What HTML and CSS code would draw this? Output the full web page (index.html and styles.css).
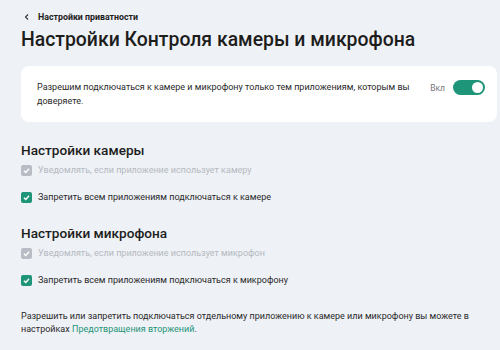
FILE: index.html
```html
<!DOCTYPE html>
<html lang="ru">

<head>
    <meta charset="UTF-8">
    <title>Настройки Контроля камеры и микрофона</title>
    <link rel="stylesheet" href="styles.css">
</head>

<body>
    <div class="page">
        <a class="back" href="#">
            <svg width="8" height="8" viewBox="0 0 8 8"><path d="M5 1.5 L2.5 4 L5 6.5" fill="none" stroke="#333" stroke-width="1.1"/></svg>
            <span>Настройки приватности</span>
        </a>
        <h1>Настройки Контроля камеры и микрофона</h1>

        <div class="card">
            <p>Разрешим подключаться к камере и микрофону только тем приложениям, которым вы доверяете.</p>
            <div class="switch-box">
                <span class="switch-label">Вкл</span>
                <span class="switch"><span class="thumb"></span></span>
            </div>
        </div>

        <h2>Настройки камеры</h2>
        <div class="option disabled">
            <span class="check"><svg viewBox="0 0 12 12"><path d="M3.2 6.2 L5.2 8.1 L8.8 4.2" fill="none" stroke="#fff" stroke-width="1.6"/></svg></span>
            Уведомлять, если приложение использует камеру
        </div>
        <div class="option">
            <span class="check"><svg viewBox="0 0 12 12"><path d="M3.2 6.2 L5.2 8.1 L8.8 4.2" fill="none" stroke="#fff" stroke-width="1.6"/></svg></span>
            Запретить всем приложениям подключаться к камере
        </div>

        <h2>Настройки микрофона</h2>
        <div class="option disabled">
            <span class="check"><svg viewBox="0 0 12 12"><path d="M3.2 6.2 L5.2 8.1 L8.8 4.2" fill="none" stroke="#fff" stroke-width="1.6"/></svg></span>
            Уведомлять, если приложение использует микрофон
        </div>
        <div class="option">
            <span class="check"><svg viewBox="0 0 12 12"><path d="M3.2 6.2 L5.2 8.1 L8.8 4.2" fill="none" stroke="#fff" stroke-width="1.6"/></svg></span>
            Запретить всем приложениям подключаться к микрофону
        </div>

        <p class="note">Разрешить или запретить подключаться отдельному приложению к камере или микрофону вы можете в настройках <a href="#">Предотвращения вторжений</a>.</p>
    </div>
</body>

</html>
```

FILE: styles.css
```css
body {
    margin: 0;
    background: #eef1f6;
    font-family: Roboto, "Noto Sans", sans-serif;
    color: #1d1d1b;
}

.page {
    padding: 10px 3px 0 21px;
}

.back {
    display: flex;
    align-items: center;
    gap: 7px;
    font-size: 8.8px;
    font-weight: 700;
    color: #1d1d1b;
    text-decoration: none;
    margin-left: 2px;
    height: 14px;
}

h1 {
    font-size: 19.4px;
    font-weight: 500;
    margin: 4px 0 0;
    line-height: 24px;
}

.card {
    background: #fff;
    border-radius: 8px;
    margin-top: 14px;
    padding: 14px 12px 14px 16px;
    display: flex;
    align-items: flex-start;
    gap: 18px;
    height: 28px;
}

.card p {
    margin: 0;
    font-size: 9px;
    line-height: 14px;
    flex: 1;
    color: #2a2a2a;
}

.switch-box {
    display: flex;
    align-items: center;
    gap: 8px;
}

.switch-label {
    font-size: 8.5px;
    color: #777;
}

.switch {
    width: 32px;
    height: 15px;
    border-radius: 8px;
    background: #1e9478;
    display: flex;
    justify-content: flex-end;
    align-items: center;
    padding: 0 2px;
    box-sizing: border-box;
}

.thumb {
    width: 11px;
    height: 11px;
    border-radius: 50%;
    background: #fff;
}

h2 {
    font-size: 13.6px;
    font-weight: 500;
    margin: 19px 0 4px;
    line-height: 18px;
}

.option {
    display: flex;
    align-items: center;
    gap: 6px;
    font-size: 9px;
    height: 14px;
    color: #2a2a2a;
}

.option + .option {
    margin-top: 13px;
}

.option + h2 {
    margin-top: 20px;
}

.check {
    width: 11px;
    height: 11px;
    border-radius: 2px;
    background: #1e9478;
    display: flex;
}

.check svg {
    width: 11px;
    height: 11px;
}

.option.disabled {
    color: #b5b9c0;
}

.option.disabled .check {
    background: #b8bcc4;
}

.note {
    font-size: 9px;
    line-height: 13px;
    color: #2a2a2a;
    margin: 23px 0 0;
}

.note a {
    color: #1e9478;
    text-decoration: none;
}
```
